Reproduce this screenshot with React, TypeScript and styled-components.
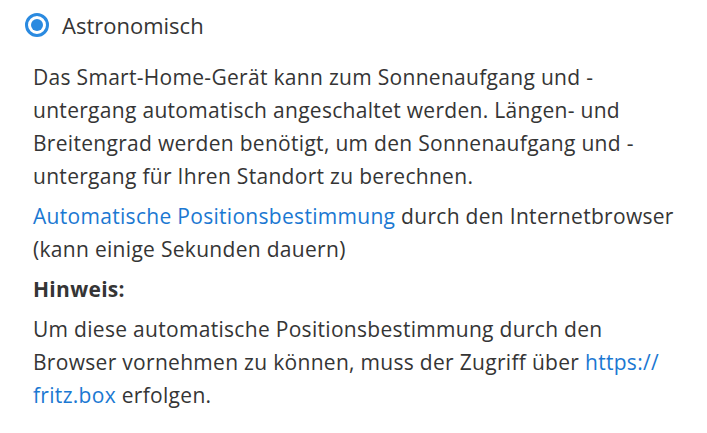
import React from 'react';
import styled, { createGlobalStyle } from 'styled-components';

const GlobalStyle = createGlobalStyle`
  body {
    margin: 0;
    background: #ffffff;
    font-family: 'Open Sans', 'Liberation Sans', sans-serif;
    color: #353535;
  }
`;

const Panel = styled.div`
  width: 707px;
  padding: 0 0 0 22px;
  box-sizing: border-box;
`;

const RadioRow = styled.label`
  display: flex;
  align-items: center;
  gap: 13px;
  height: 50px;
  padding-left: 3px;
  cursor: pointer;
`;

const RadioCircle = styled.span<{ $checked?: boolean }>`
  width: 24px;
  height: 24px;
  box-sizing: border-box;
  border-radius: 50%;
  border: 3px solid #2a8ae0;
  display: flex;
  align-items: center;
  justify-content: center;

  &::after {
    content: '';
    width: 12px;
    height: 12px;
    border-radius: 50%;
    background: ${p => (p.$checked ? '#2a8ae0' : 'transparent')};
  }
`;

const RadioLabel = styled.span`
  font-size: 22px;
  color: #353535;
`;

const Description = styled.div`
  padding-left: 11px;
  margin-top: 11px;
  font-size: 21px;
  letter-spacing: 0.3px;
  line-height: 33px;
`;

const Para = styled.p`
  margin: 0 0 7px;
`;

const Heading = styled.p`
  margin: 0 0 7px;
  font-weight: 700;
`;

const Link = styled.a`
  color: #1b78d2;
  text-decoration: none;
`;

export default function App() {
  return (
    <>
      <GlobalStyle />
      <Panel>
        <RadioRow>
          <RadioCircle $checked />
          <RadioLabel>Astronomisch</RadioLabel>
        </RadioRow>
        <Description>
          <Para>
            Das Smart-Home-Gerät kann zum Sonnenaufgang und -<br />
            untergang automatisch angeschaltet werden. Längen- und<br />
            Breitengrad werden benötigt, um den Sonnenaufgang und -<br />
            untergang für Ihren Standort zu berechnen.
          </Para>
          <Para>
            <Link href="#">Automatische Positionsbestimmung</Link> durch den Internetbrowser<br />
            (kann einige Sekunden dauern)
          </Para>
          <Heading>Hinweis:</Heading>
          <Para>
            Um diese automatische Positionsbestimmung durch den<br />
            Browser vornehmen zu können, muss der Zugriff über <Link href="#">https://</Link>
            <br />
            <Link href="#">fritz.box</Link> erfolgen.
          </Para>
        </Description>
      </Panel>
    </>
  );
}
